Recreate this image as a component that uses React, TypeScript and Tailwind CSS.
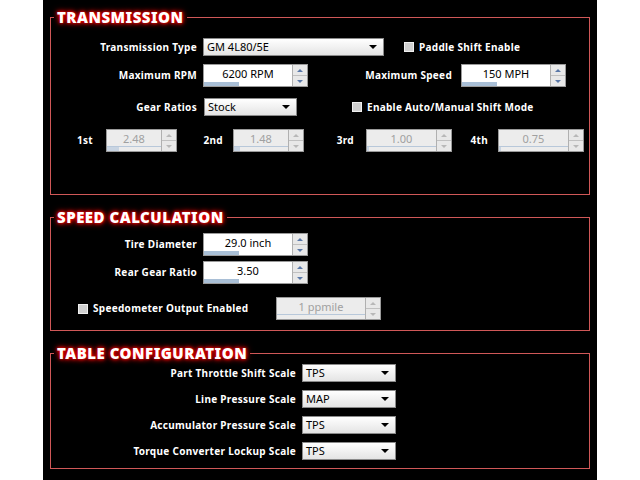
import React from "react";

const lbl = "font-['DejaVu_Sans',sans-serif] font-bold text-[10px] text-white tracking-[0.3px] whitespace-nowrap";

function Spinner({ value, w, fill, disabled }: { value: string; w: number; fill: number; disabled?: boolean }) {
  return (
    <div className="flex h-[23px] border border-[#9a9a9a] bg-[#d8d8d8]" style={{ width: w }}>
      <div className={`relative flex-1 ${disabled ? "bg-[#ececec]" : "bg-white"} border-r border-[#b0b0b0]`}>
        <div className={`text-center text-[11px] leading-[18px] font-['Liberation_Sans',sans-serif] ${disabled ? "text-[#a0a0a0]" : "text-black"}`}>{value}</div>
        <div className={`absolute left-0 bottom-0 h-[4px] ${disabled ? "bg-[#c8d4e2]" : "bg-[#a9bfd6]"}`} style={{ width: `${fill}%` }} />
        {disabled && <div className="absolute left-0 right-0 bottom-[4px] h-px bg-[#b8c8da]" />}
      </div>
      <div className="w-[14px] flex flex-col bg-[#e8e8e8]">
        <div className="flex-1 flex items-center justify-center border-b border-[#c0c0c0]">
          <div className={`w-0 h-0 border-l-[3px] border-r-[3px] border-b-[3px] border-l-transparent border-r-transparent ${disabled ? "border-b-[#b8b8b8]" : "border-b-[#5a78a8]"}`} />
        </div>
        <div className="flex-1 flex items-center justify-center">
          <div className={`w-0 h-0 border-l-[3px] border-r-[3px] border-t-[3px] border-l-transparent border-r-transparent ${disabled ? "border-t-[#b8b8b8]" : "border-t-[#5a78a8]"}`} />
        </div>
      </div>
    </div>
  );
}

function Select({ value, w }: { value: string; w: number }) {
  return (
    <div className="flex items-center h-[18px] border border-[#8a8a8a] bg-gradient-to-b from-white to-[#e4e4e4] px-[3px]" style={{ width: w }}>
      <span className="flex-1 text-[11px] text-black font-['Liberation_Sans',sans-serif]">{value}</span>
      <div className="w-0 h-0 border-l-[4px] border-r-[4px] border-t-[4px] border-l-transparent border-r-transparent border-t-black mr-[3px]" />
    </div>
  );
}

function Check({ label }: { label: string }) {
  return (
    <div className="flex items-center gap-[5px]">
      <div className="w-[10px] h-[10px] bg-[#d0d0d0] border border-[#f0f0f0]" />
      <span className={lbl}>{label}</span>
    </div>
  );
}

function Box({ title, h, children }: { title: string; h: number; children: React.ReactNode }) {
  return (
    <div className="relative border border-[#d05858] ml-[7px] w-[540px]" style={{ height: h }}>
      <div className="absolute left-[3px] top-[-11px] bg-black px-[3px] text-[15px] leading-[20px] font-['DejaVu_Sans',sans-serif] font-black text-white tracking-[0.5px] [text-shadow:0_0_3px_#ff0000,0_0_5px_#ff0000,0_0_7px_#c00000]">
        {title}
      </div>
      {children}
    </div>
  );
}

export default function App() {
  return (
    <div className="w-[640px] h-[480px] bg-white">
      <div className="ml-[43px] w-[554px] h-[477px] bg-black border-b-[3px] border-[#555] flex flex-col pt-[17px] gap-[22px] box-content">
        <Box title="TRANSMISSION" h={178}>
          <div className="flex items-center absolute top-[20px] left-0">
            <div className={`${lbl} w-[146px] text-right mr-[6px]`}>Transmission Type</div>
            <Select value="GM 4L80/5E" w={181} />
            <div className="ml-[20px]"><Check label="Paddle Shift Enable" /></div>
          </div>
          <div className="flex items-center absolute top-[46px] left-0">
            <div className={`${lbl} w-[146px] text-right mr-[6px]`}>Maximum RPM</div>
            <Spinner value="6200 RPM" w={105} fill={40} />
            <div className={`${lbl} w-[144px] text-right mr-[9px]`}>Maximum Speed</div>
            <Spinner value="150 MPH" w={105} fill={40} />
          </div>
          <div className="flex items-center absolute top-[80px] left-0">
            <div className={`${lbl} w-[146px] text-right mr-[7px]`}>Gear Ratios</div>
            <Select value="Stock" w={93} />
            <div className="ml-[55px]"><Check label="Enable Auto/Manual Shift Mode" /></div>
          </div>
          <div className="flex items-center absolute top-[111px] left-0">
            <div className={`${lbl} text-[#9a9a9a] w-[42px] text-right mr-[13px]`}>1st</div>
            <Spinner value="2.48" w={71} fill={22} disabled />
            <div className={`${lbl} text-[#9a9a9a] w-[46px] text-right mr-[10px]`}>2nd</div>
            <Spinner value="1.48" w={71} fill={12} disabled />
            <div className={`${lbl} text-[#9a9a9a] w-[50px] text-right mr-[12px]`}>3rd</div>
            <Spinner value="1.00" w={86} fill={3} disabled />
            <div className={`${lbl} text-[#9a9a9a] w-[36px] text-right mr-[10px]`}>4th</div>
            <Spinner value="0.75" w={86} fill={3} disabled />
          </div>
        </Box>
        <Box title="SPEED CALCULATION" h={114}>
          <div className="flex items-center absolute top-[15px] left-0">
            <div className={`${lbl} w-[146px] text-right mr-[6px]`}>Tire Diameter</div>
            <Spinner value="29.0 inch" w={105} fill={40} />
          </div>
          <div className="flex items-center absolute top-[43px] left-0">
            <div className={`${lbl} w-[146px] text-right mr-[6px]`}>Rear Gear Ratio</div>
            <Spinner value="3.50" w={105} fill={40} />
          </div>
          <div className="flex items-center absolute top-[79px] left-[27px]">
            <div className="w-[198px]"><Check label="Speedometer Output Enabled" /></div>
            <Spinner value="1 ppmile" w={105} fill={0} disabled />
          </div>
        </Box>
        <Box title="TABLE CONFIGURATION" h={116}>
          {[["Part Throttle Shift Scale", "TPS"], ["Line Pressure Scale", "MAP"], ["Accumulator Pressure Scale", "TPS"], ["Torque Converter Lockup Scale", "TPS"]].map(([l, v], i) => (
            <div key={l} className="flex items-center absolute left-0" style={{ top: 10 + i * 26 }}>
              <div className={`${lbl} w-[245px] text-right mr-[6px]`}>{l}</div>
              <Select value={v} w={94} />
            </div>
          ))}
        </Box>
      </div>
    </div>
  );
}
